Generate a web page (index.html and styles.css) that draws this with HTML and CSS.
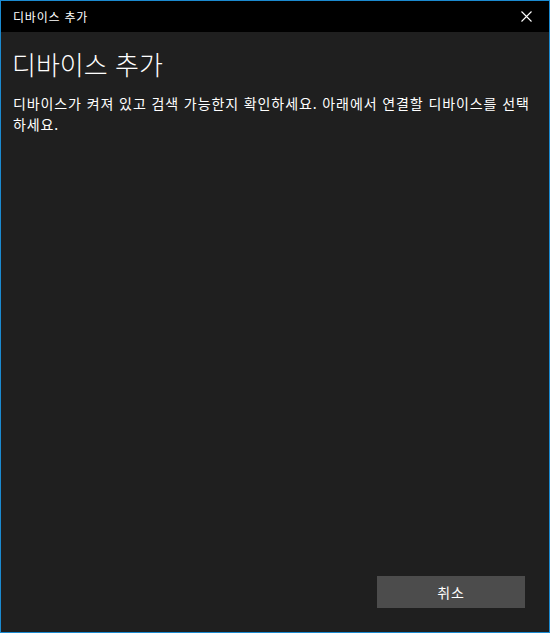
FILE: index.html
```html
<!DOCTYPE html>
<html lang="ko">
<head>
<meta charset="utf-8">
<link rel="stylesheet" href="styles.css">
</head>
<body>
<div class="window">
  <div class="titlebar">
    <span class="title">디바이스 추가</span>
    <span class="close">
      <svg width="11" height="11" viewBox="0 0 11 11"><path d="M0.5 0.5 L10.5 10.5 M10.5 0.5 L0.5 10.5" stroke="#fff" stroke-width="1.1"/></svg>
    </span>
  </div>
  <div class="content">
    <h1 class="heading">디바이스 추가</h1>
    <p class="desc">디바이스가 켜져 있고 검색 가능한지 확인하세요. 아래에서 연결할 디바이스를 선택하세요.</p>
    <div class="spacer"></div>
    <div class="actions">
      <button class="btn">취소</button>
    </div>
  </div>
</div>
</body>
</html>
```
FILE: styles.css
```css
html, body {
  margin: 0;
  padding: 0;
  width: 550px;
  height: 633px;
  overflow: hidden;
  background: #1f1f1f;
}
.window {
  box-sizing: border-box;
  width: 550px;
  height: 633px;
  border: 1px solid #1b8ad0;
  display: flex;
  flex-direction: column;
  font-family: "Noto Sans CJK KR", "Noto Sans", sans-serif;
  color: #fff;
}
.titlebar {
  height: 31px;
  background: #000;
  display: flex;
  align-items: center;
  justify-content: space-between;
  flex-shrink: 0;
}
.title {
  font-size: 12px;
  padding-left: 12px;
  letter-spacing: 0.8px;
  color: #fff;
}
.close {
  width: 46px;
  height: 31px;
  display: flex;
  align-items: center;
  justify-content: center;
}
.close svg { display: block; }
.content {
  flex: 1;
  background: #1f1f1f;
  display: flex;
  flex-direction: column;
  padding: 0 24px 24px 12px;
}
.heading {
  margin: 14px 0 0 -1px;
  font-size: 26px;
  font-weight: 300;
  line-height: 36px;
  color: #fff;
}
.desc {
  margin: 11px 0 0 0;
  font-size: 14px;
  line-height: 21px;
  letter-spacing: 0.9px;
  color: #fff;
  width: 530px;
}
.spacer { flex: 1; }
.actions {
  display: flex;
  justify-content: flex-end;
}
.btn {
  width: 148px;
  height: 32px;
  background: #4c4c4c;
  border: none;
  color: #fff;
  font-family: "Noto Sans CJK KR", "Noto Sans", sans-serif;
  font-size: 14px;
  letter-spacing: 0.8px;
  padding: 0;
}
```
